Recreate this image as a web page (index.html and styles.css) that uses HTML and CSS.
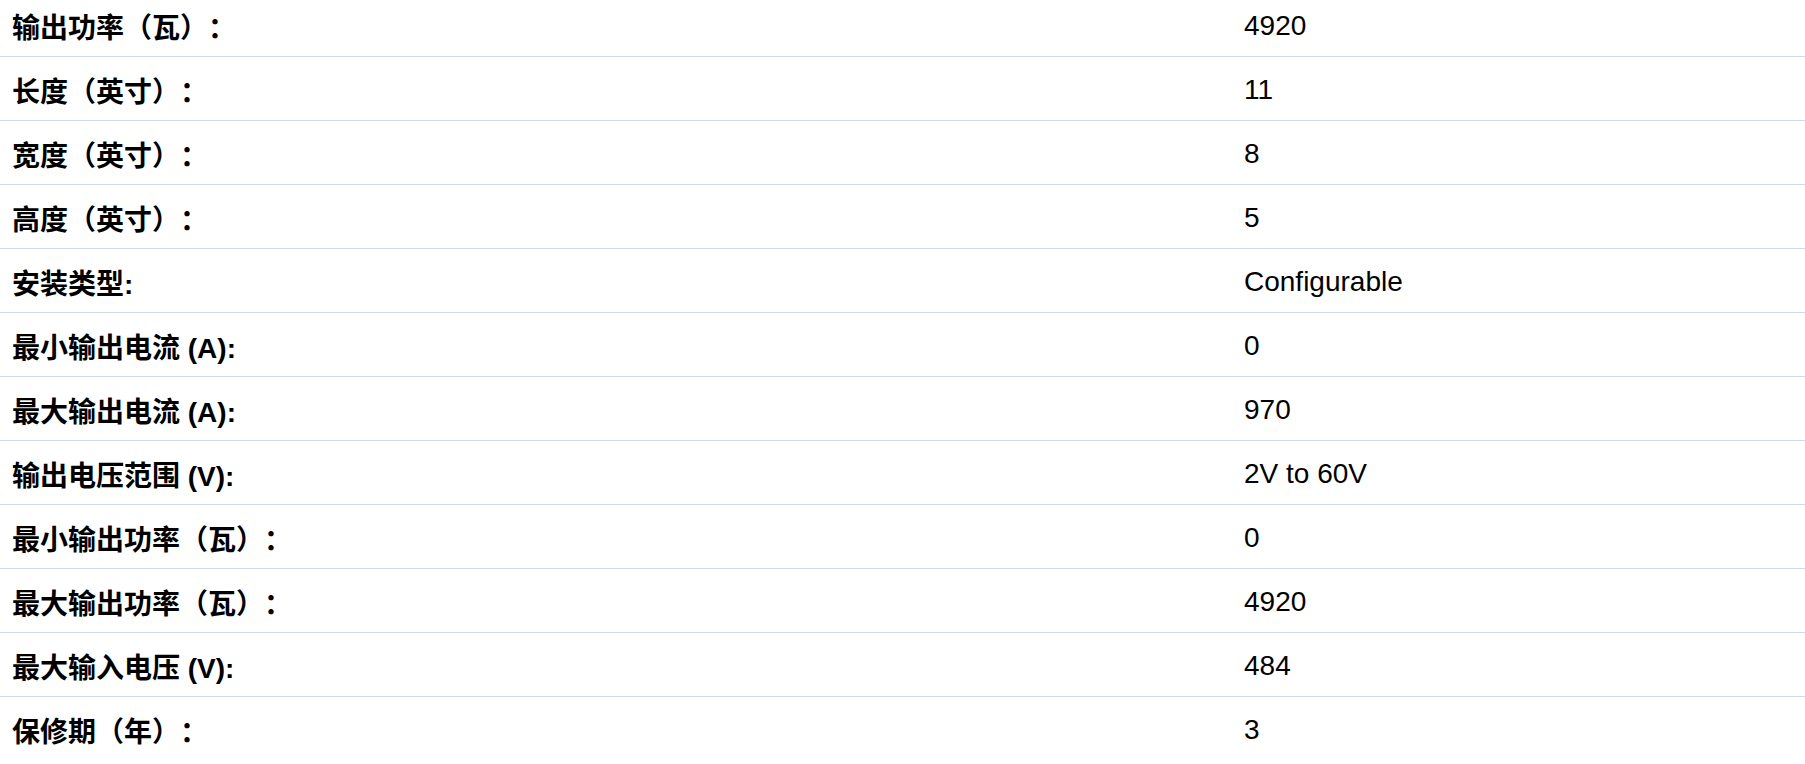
FILE: index.html
```html
<!DOCTYPE html>
<html lang="zh">
<head>
<meta charset="utf-8">
<link rel="stylesheet" href="styles.css">
</head>
<body>
<div class="specs">
  <div class="row"><div class="label">输出功率（瓦）：</div><div class="value">4920</div></div>
  <div class="row"><div class="label">长度（英寸）：</div><div class="value">11</div></div>
  <div class="row"><div class="label">宽度（英寸）：</div><div class="value">8</div></div>
  <div class="row"><div class="label">高度（英寸）：</div><div class="value">5</div></div>
  <div class="row"><div class="label">安装类型:</div><div class="value">Configurable</div></div>
  <div class="row"><div class="label">最小输出电流 (A):</div><div class="value">0</div></div>
  <div class="row"><div class="label">最大输出电流 (A):</div><div class="value">970</div></div>
  <div class="row"><div class="label">输出电压范围 (V):</div><div class="value">2V to 60V</div></div>
  <div class="row"><div class="label">最小输出功率（瓦）：</div><div class="value">0</div></div>
  <div class="row"><div class="label">最大输出功率（瓦）：</div><div class="value">4920</div></div>
  <div class="row"><div class="label">最大输入电压 (V):</div><div class="value">484</div></div>
  <div class="row"><div class="label">保修期（年）：</div><div class="value">3</div></div>
</div>
</body>
</html>
```
FILE: styles.css
```css
html, body {
  margin: 0;
  padding: 0;
  background: #ffffff;
}
body {
  font-family: "Liberation Sans", "Noto Sans CJK SC", sans-serif;
  font-size: 28px;
  color: #000;
  overflow: hidden;
  text-spacing-trim: space-all;
}
.specs {
  display: flex;
  flex-direction: column;
  margin-top: -7px;
}
.row {
  display: grid;
  grid-template-columns: 1232px 1fr;
  align-items: center;
  height: 63px;
  border-bottom: 1px solid #d1d9e0;
}
.row:last-child {
  border-bottom: none;
}
.label {
  font-weight: bold;
  padding: 2px 12px 0;
  white-space: nowrap;
  text-spacing-trim: space-all;
}
.value {
  padding: 2px 12px 0;
  white-space: nowrap;
}
```
